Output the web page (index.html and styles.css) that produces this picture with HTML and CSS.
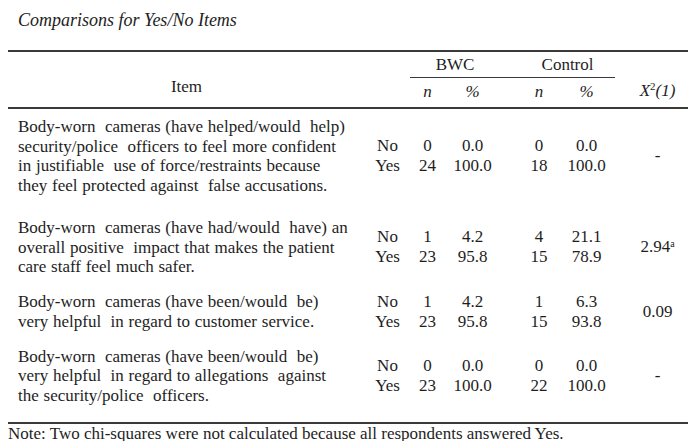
FILE: index.html
```html
<!DOCTYPE html>
<html>
<head>
<meta charset="utf-8">
<link rel="stylesheet" href="styles.css">
</head>
<body>
<div class="page">
  <p class="title">Comparisons for Yes/No Items</p>
  <table class="tbl">
    <colgroup>
      <col class="c-item"><col class="c-yn"><col class="c-n1"><col class="c-p1"><col class="c-gap"><col class="c-n2"><col class="c-p2"><col class="c-x">
    </colgroup>
    <thead>
      <tr class="h1">
        <th rowspan="2" class="item-h">Item</th>
        <th rowspan="2"></th>
        <th colspan="2" class="grp">BWC</th>
        <th class="grp"></th>
        <th colspan="2" class="grp">Control</th>
        <th rowspan="2" class="xh"><i>X</i><sup>2</sup><i>(1)</i></th>
      </tr>
      <tr class="h2">
        <th><i>n</i></th>
        <th><i>%</i></th>
        <th></th>
        <th><i>n</i></th>
        <th><i>%</i></th>
      </tr>
    </thead>
    <tbody>
      <tr class="r1">
        <td class="item">Body-worn&nbsp; cameras (have helped/would&nbsp; help)<br>security/police&nbsp; officers to feel more confident<br>in justifiable&nbsp; use of force/restraints because<br>they feel protected against&nbsp; false accusations.</td>
        <td class="num">No<br>Yes</td>
        <td class="num">0<br>24</td>
        <td class="num">0.0<br>100.0</td>
        <td></td>
        <td class="num">0<br>18</td>
        <td class="num">0.0<br>100.0</td>
        <td class="x">-</td>
      </tr>
      <tr class="r2">
        <td class="item">Body-worn&nbsp; cameras (have had/would&nbsp; have) an<br>overall positive&nbsp; impact that makes the patient<br>care staff feel much safer.</td>
        <td class="num">No<br>Yes</td>
        <td class="num">1<br>23</td>
        <td class="num">4.2<br>95.8</td>
        <td></td>
        <td class="num">4<br>15</td>
        <td class="num">21.1<br>78.9</td>
        <td class="x">2.94<sup class="fn">a</sup></td>
      </tr>
      <tr class="r3">
        <td class="item">Body-worn&nbsp; cameras (have been/would&nbsp; be)<br>very helpful&nbsp; in regard to customer service.</td>
        <td class="num">No<br>Yes</td>
        <td class="num">1<br>23</td>
        <td class="num">4.2<br>95.8</td>
        <td></td>
        <td class="num">1<br>15</td>
        <td class="num">6.3<br>93.8</td>
        <td class="x">0.09</td>
      </tr>
      <tr class="r4">
        <td class="item">Body-worn&nbsp; cameras (have been/would&nbsp; be)<br>very helpful&nbsp; in regard to allegations&nbsp; against<br>the security/police&nbsp; officers.</td>
        <td class="num">No<br>Yes</td>
        <td class="num">0<br>23</td>
        <td class="num">0.0<br>100.0</td>
        <td></td>
        <td class="num">0<br>22</td>
        <td class="num">0.0<br>100.0</td>
        <td class="x">-</td>
      </tr>
    </tbody>
  </table>
  <p class="note">Note: Two chi-squares were not calculated because all respondents answered Yes.</p>
</div>
</body>
</html>
```

FILE: styles.css
```css
html, body {
  margin: 0;
  padding: 0;
  background: #ffffff;
}
body {
  font-family: "Liberation Serif", "Times New Roman", serif;
  color: #1e1e1e;
  font-size: 17px;
}
.page {
  padding: 0 12px 0 8px;
}
.title {
  margin: 0;
  padding: 10px 0 0 10px;
  font-style: italic;
  font-size: 18px;
  line-height: 20px;
  height: 40px;
}
.tbl {
  width: 680px;
  table-layout: fixed;
  border-collapse: collapse;
  border-top: 2px solid #3a3a3a;
  border-bottom: 2px solid #3a3a3a;
}
.c-item { width: 357px; }
.c-yn { width: 45px; }
.c-n1 { width: 35px; }
.c-p1 { width: 55px; }
.c-gap { width: 20px; }
.c-n2 { width: 38px; }
.c-p2 { width: 57px; }
.c-x { width: 73px; }
th {
  font-weight: normal;
  padding: 0;
  line-height: 20px;
}
.h1 th {
  height: 20px;
  padding: 3px 0 2px;
}
.h1 th.grp {
  border-bottom: 1.5px solid #3a3a3a;
}
.h2 th {
  padding: 4px 0 5px;
}
thead tr.h2 {
  border-bottom: 2px solid #3a3a3a;
}
.item-h {
  vertical-align: bottom;
  padding-bottom: 10px !important;
  text-align: center;
}
.xh {
  vertical-align: bottom;
  padding: 0 0 6px 12px !important;
}
.xh sup {
  font-size: 11px;
  line-height: 0;
  vertical-align: 6px;
}
td {
  padding: 0;
  vertical-align: middle;
  line-height: 20px;
}
td.item {
  line-height: 19.5px;
  white-space: nowrap;
  word-spacing: 0.5px;
}
td.num {
  text-align: center;
}
.fn {
  font-size: 10px;
  line-height: 0;
  vertical-align: 5px;
}
.r1 td { padding-top: 8px; padding-bottom: 12px; }
.r2 td { padding-top: 11px; padding-bottom: 7px; }
.r3 td { padding-top: 8px; padding-bottom: 7px; }
.r4 td { padding-top: 8px; padding-bottom: 17px; }
.r1 td.x, .r2 td.x, .r3 td.x, .r4 td.x { padding-left: 12px; text-align: center; }
.r1 td.item, .r2 td.item, .r3 td.item, .r4 td.item { padding-left: 10px; }
.note {
  margin: 0;
  padding-top: 0;
  line-height: 20px;
  white-space: nowrap;
}
```
